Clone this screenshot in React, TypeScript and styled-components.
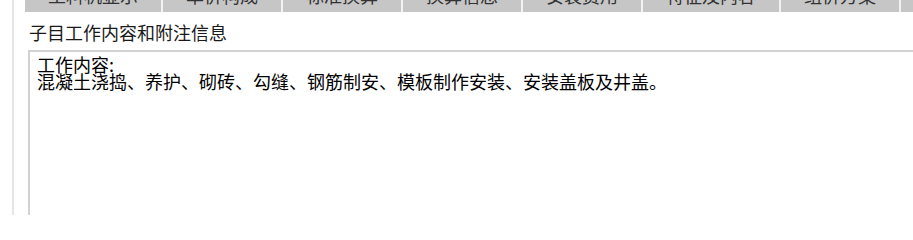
import styled, { createGlobalStyle } from "styled-components";

const GlobalStyle = createGlobalStyle`
  html, body {
    margin: 0;
    padding: 0;
    background: #ffffff;
    overflow: hidden;
  }
  body {
    font-family: "Noto Sans CJK SC", "Microsoft YaHei", sans-serif;
    color: #111111;
  }
`;

const Page = styled.div`
  display: flex;
  height: 215px;
  width: 960px;
  overflow: hidden;
`;

const Gutter = styled.div`
  width: 12px;
  flex-shrink: 0;
  border-right: 2px solid #e6e6e6;
`;

const Main = styled.div`
  flex: 1;
  display: flex;
  flex-direction: column;
  padding-left: 11px;
  min-width: 0;
`;

// only the lower edge of the tab strip is in view
const TabBar = styled.div`
  display: flex;
  flex-shrink: 0;
  height: 12px;
  overflow: hidden;
  background: #c6c6c6;
  align-items: flex-end;
`;

const Tab = styled.div<{ $first?: boolean }>`
  flex-shrink: 0;
  padding: 0 23px 8px;
  font-size: 18px;
  line-height: 18px;
  color: #333333;
  white-space: nowrap;
  border-left: ${(props) => (props.$first ? "none" : "2px solid #f2f2f2")};
`;

const Section = styled.div`
  display: flex;
  flex-direction: column;
  flex-shrink: 0;
  padding-left: 3px;
`;

const Title = styled.div`
  margin: 11px 0 9px 1px;
  font-size: 18px;
  line-height: 18px;
  color: #1a1a1a;
`;

const TextBox = styled.div`
  height: 200px;
  border-top: 2px solid #d2d2d2;
  border-left: 2px solid #d2d2d2;
  padding: 4px 0 0 7px;
  font-size: 18px;
  line-height: 17px;
  color: #000000;
  white-space: pre;
`;

const tabs = [
  "工料机显示",
  "单价构成",
  "标准换算",
  "换算信息",
  "安装费用",
  "特征及内容",
  "组价方案",
  "工程量明细",
];

function App() {
  return (
    <>
      <GlobalStyle />
      <Page>
        <Gutter />
        <Main>
          <TabBar>
            {tabs.map((t, i) => (
              <Tab key={t} $first={i === 0}>
                {t}
              </Tab>
            ))}
          </TabBar>
          <Section>
            <Title>子目工作内容和附注信息</Title>
            <TextBox>
              {"工作内容:\n混凝土浇捣、养护、砌砖、勾缝、钢筋制安、模板制作安装、安装盖板及井盖。"}
            </TextBox>
          </Section>
        </Main>
      </Page>
    </>
  );
}

export default App;
